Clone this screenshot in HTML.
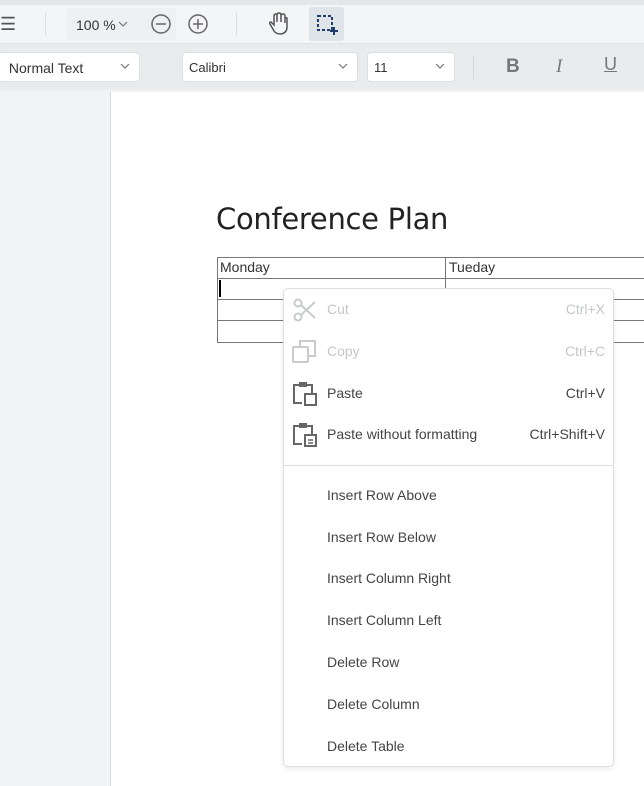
<!DOCTYPE html>
<html><head><style>
*{margin:0;padding:0;box-sizing:border-box}
body{width:644px;height:786px;overflow:hidden;background:#f1f3f5;font-family:"Liberation Sans",sans-serif;position:relative}
.abs{position:absolute}
.sel{position:absolute;top:52px;height:30px;background:#fff;border:1px solid #dde0e3;border-radius:4px;font-size:14px;color:#333;padding:7px 6px}
.sel .ch{position:absolute;right:9px;top:9px}
.mi{position:absolute;left:43px;font-size:14px;color:#444}
.sc{position:absolute;right:8px;font-size:14px;color:#444}
.dis{color:#c4c7ca}
</style></head><body>
<div class="abs" style="left:0;top:0;width:644px;height:5px;background:#e4e6e8"></div>
<div class="abs" style="left:0;top:5px;width:644px;height:39px;background:#f4f5f6;border-bottom:1px solid #e0e2e4"></div>
<div class="abs" style="left:0;top:14px;font-size:18px;color:#555">☰</div>
<div class="abs" style="left:45px;top:13px;width:1px;height:22px;background:#ddd"></div>
<div class="abs" style="left:66px;top:8px;width:110px;height:32px;background:#eef0f2;border-radius:4px"></div>
<div class="abs" style="left:76px;top:17px;font-size:14px;color:#333">100 %</div>
<svg class="abs" style="left:118px;top:20px" width="10" height="8"><path d="M1 2l4 4 4-4" fill="none" stroke="#777" stroke-width="1.2"/></svg>
<svg class="abs" style="left:150px;top:13px" width="22" height="22"><circle cx="11" cy="11" r="9" fill="none" stroke="#666" stroke-width="1.5"/><path d="M6 11h10" stroke="#666" stroke-width="1.5"/></svg>
<svg class="abs" style="left:187px;top:13px" width="22" height="22"><circle cx="11" cy="11" r="9" fill="none" stroke="#666" stroke-width="1.5"/><path d="M6 11h10M11 6v10" stroke="#666" stroke-width="1.5"/></svg>
<div class="abs" style="left:236px;top:13px;width:1px;height:22px;background:#ddd"></div>
<svg class="abs" style="left:266px;top:11px" width="24" height="26"><path d="M8 20 L4 13 Q3 11 5 11 L8 14 V5 Q8 3 10 3 Q11 3 11 5 V11 V4 Q11 2 13 2 Q15 2 15 4 V11 V5 Q15 3 17 3 Q19 3 19 5 V12 V8 Q19 6 21 7 V16 Q21 22 15 23 Q10 23 8 20Z" fill="none" stroke="#555" stroke-width="1.5"/></svg>
<div class="abs" style="left:309px;top:7px;width:35px;height:34px;background:#dfe4e9;border-radius:3px"></div>
<svg class="abs" style="left:315px;top:13px" width="24" height="24"><rect x="3" y="3" width="14" height="14" fill="none" stroke="#1f3d6b" stroke-width="2" stroke-dasharray="3 2"/><path d="M19 14v8M15 18h8" stroke="#1f3d6b" stroke-width="2"/></svg>
<div class="abs" style="left:0;top:44px;width:644px;height:46px;background:#e9ebed"></div>
<div class="sel" style="left:-2px;width:142px">&nbsp;Normal Text<svg class="ch" width="10" height="8"><path d="M1 2l4 4 4-4" fill="none" stroke="#777" stroke-width="1.2"/></svg></div>
<div class="sel" style="left:182px;width:176px;font-size:13px">Calibri<svg class="ch" width="10" height="8"><path d="M1 2l4 4 4-4" fill="none" stroke="#777" stroke-width="1.2"/></svg></div>
<div class="sel" style="left:367px;width:88px;font-size:13px">11<svg class="ch" width="10" height="8"><path d="M1 2l4 4 4-4" fill="none" stroke="#777" stroke-width="1.2"/></svg></div>
<div class="abs" style="left:473px;top:55px;width:1px;height:24px;background:#d4d6d9"></div>
<div class="abs" style="left:506px;top:56px;font-size:19px;font-weight:bold;color:#777">B</div>
<div class="abs" style="left:556px;top:56px;font-size:19px;font-style:italic;color:#777;font-family:'Liberation Serif'">I</div>
<div class="abs" style="left:604px;top:54px;font-size:18px;color:#777;text-decoration:underline">U</div>
<div class="abs" style="left:110px;top:92px;width:534px;height:694px;background:#fff;border-left:1px solid #d8dadd"></div>
<div class="abs" style="left:216px;top:202px;font-size:29px;color:#222;font-family:'DejaVu Sans',sans-serif;font-weight:normal;letter-spacing:-0.3px">Conference Plan</div>
<div class="abs" style="left:217px;top:257px;width:440px;height:86px;border:1px solid #777"></div>
<div class="abs" style="left:217px;top:278px;width:440px;height:1px;background:#777"></div>
<div class="abs" style="left:217px;top:299px;width:440px;height:1px;background:#777"></div>
<div class="abs" style="left:217px;top:320px;width:440px;height:1px;background:#777"></div>
<div class="abs" style="left:445px;top:257px;width:1px;height:86px;background:#777"></div>
<div class="abs" style="left:220px;top:259px;font-size:14px;color:#333">Monday</div>
<div class="abs" style="left:449px;top:259px;font-size:14px;color:#333">Tueday</div>
<div class="abs" style="left:219px;top:280px;width:2px;height:17px;background:#000"></div>
<div class="abs" style="left:283px;top:288px;width:331px;height:479px;background:#fff;border:1px solid #dcdfe2;border-radius:5px;box-shadow:0 2px 6px rgba(0,0,0,.08)">
<svg class="abs" style="left:8px;top:8px" width="26" height="26"><circle cx="6" cy="6" r="3.5" fill="none" stroke="#c8cbce" stroke-width="2"/><circle cx="6" cy="20" r="3.5" fill="none" stroke="#c8cbce" stroke-width="2"/><path d="M9 8L23 21M9 18L23 5" stroke="#c8cbce" stroke-width="2"/></svg>
<div class="mi dis" style="top:12px">Cut</div><div class="sc dis" style="top:12px">Ctrl+X</div>
<svg class="abs" style="left:8px;top:50px" width="26" height="26"><rect x="1" y="8" width="15" height="15" fill="none" stroke="#c8cbce" stroke-width="2" rx="1"/><path d="M8 8V2h15v15h-7" fill="none" stroke="#c8cbce" stroke-width="2"/></svg>
<div class="mi dis" style="top:54px">Copy</div><div class="sc dis" style="top:54px">Ctrl+C</div>
<svg class="abs" style="left:8px;top:92px" width="26" height="26"><path d="M10 22H2V4h18v8" fill="none" stroke="#666" stroke-width="2"/><rect x="7" y="1" width="8" height="5" fill="#666"/><rect x="13" y="13" width="11" height="11" fill="none" stroke="#666" stroke-width="2"/></svg>
<div class="mi" style="top:96px">Paste</div><div class="sc" style="top:96px">Ctrl+V</div>
<svg class="abs" style="left:8px;top:133px" width="26" height="26"><path d="M10 22H2V4h18v8" fill="none" stroke="#666" stroke-width="2"/><rect x="7" y="1" width="8" height="5" fill="#666"/><rect x="13" y="13" width="11" height="11" fill="none" stroke="#666" stroke-width="2"/><path d="M16 18h5M16 21h5" stroke="#666" stroke-width="1.5"/></svg>
<div class="mi" style="top:137px">Paste without formatting</div><div class="sc" style="top:137px">Ctrl+Shift+V</div>
<div class="abs" style="left:0;top:176px;width:329px;height:1px;background:#dcdfe2"></div>
<div class="mi" style="top:198px">Insert Row Above</div>
<div class="mi" style="top:240px">Insert Row Below</div>
<div class="mi" style="top:281px">Insert Column Right</div>
<div class="mi" style="top:323px">Insert Column Left</div>
<div class="mi" style="top:365px">Delete Row</div>
<div class="mi" style="top:407px">Delete Column</div>
<div class="mi" style="top:449px">Delete Table</div>
</div>
</body></html>
